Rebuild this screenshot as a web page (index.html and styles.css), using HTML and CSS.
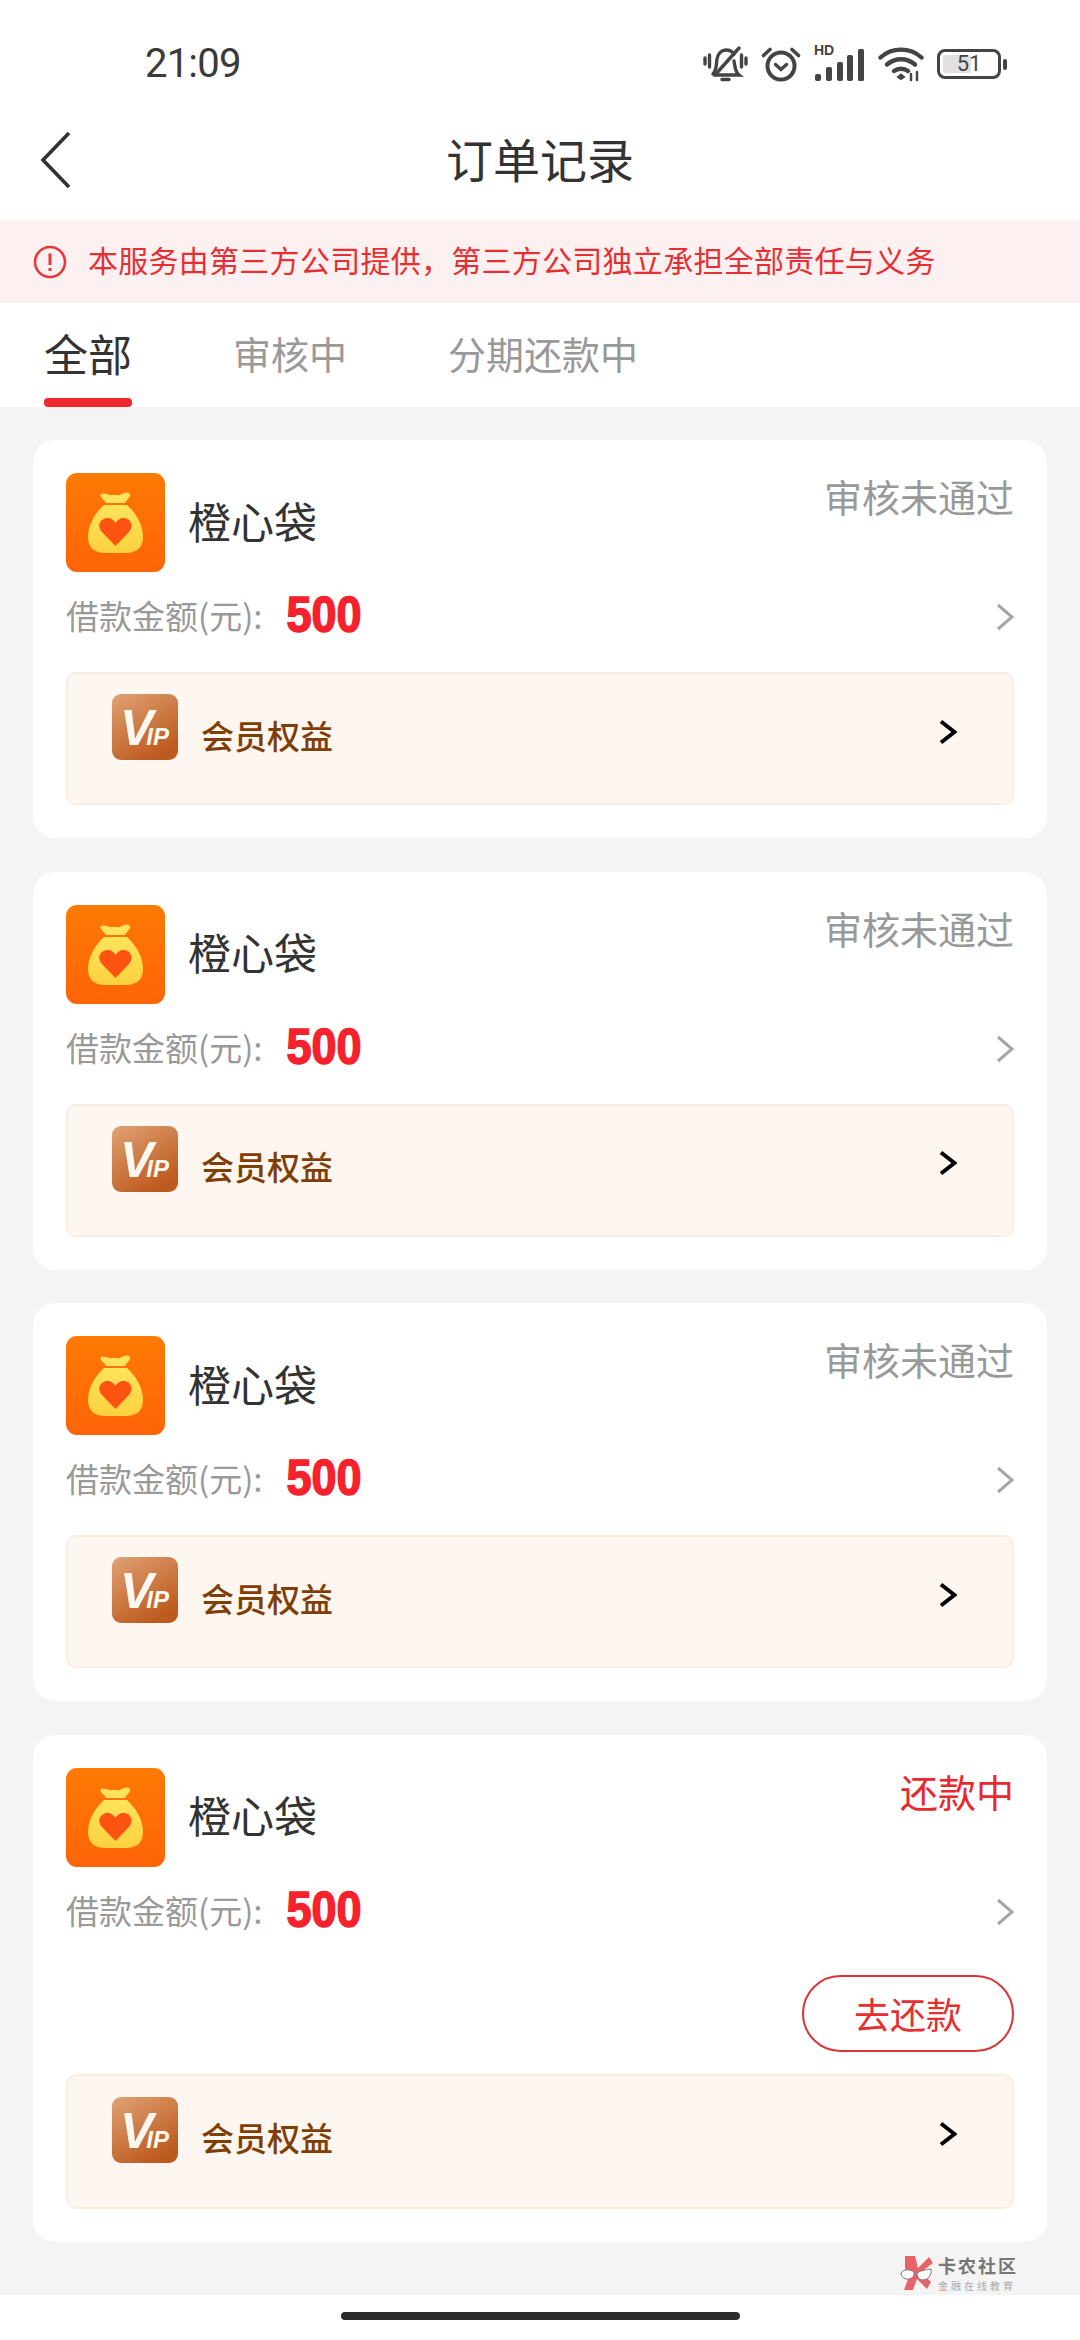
FILE: index.html
```html
<!DOCTYPE html>
<html lang="zh-CN">
<head>
    <meta charset="UTF-8">
    <meta name="viewport" content="width=device-width, initial-scale=1.0">
    <title>订单记录</title>
    <link rel="stylesheet" href="styles.css">
</head>
<body>
    <svg class="defs" width="0" height="0" aria-hidden="true">
        <defs>
            <linearGradient id="bagBg" x1="0" y1="0" x2="0" y2="1">
                <stop offset="0" stop-color="#ff7a05"/>
                <stop offset="1" stop-color="#ff6408"/>
            </linearGradient>
            <linearGradient id="bagBody" x1="0" y1="0" x2="0" y2="1">
                <stop offset="0" stop-color="#ffe35c"/>
                <stop offset="1" stop-color="#fcd13e"/>
            </linearGradient>
            <linearGradient id="vipBg" x1="0" y1="0" x2="0.6" y2="1">
                <stop offset="0" stop-color="#e0a274"/>
                <stop offset="1" stop-color="#bd5a1e"/>
            </linearGradient>
            <symbol id="bag" viewBox="0 0 99 99">
                <rect width="99" height="99" rx="11" fill="url(#bagBg)"/>
                <path fill="url(#bagBody)" d="M38 32H61C70 40 77 52 77 64C77 75 70 80 60 80H39C29 80 22 75 22 64C22 52 29 40 38 32Z"/>
                <path fill="#ffe35c" d="M35 21C39 19 43 23 46 22C49 21 51 23 54 22C57 20 62 18 64 21C65 24 61 26 59 30H40C38 26 33 24 35 21Z"/>
                <path fill="#ff5312" d="M49.5 73L36 59C30 52 35 45 42 45C45 45 48 47 49.5 50C51 47 54 45 57 45C64 45 69 52 63 59Z"/>
            </symbol>
            <symbol id="vip" viewBox="0 0 66 66">
                <rect width="66" height="66" rx="9" fill="url(#vipBg)"/>
                <text class="vip-text" x="8" y="51"><tspan class="vip-v">V</tspan><tspan class="vip-ip" dx="-7">IP</tspan></text>
            </symbol>
            <symbol id="arrow-gray" viewBox="0 0 18 28">
                <path d="M2 2L16 14L2 26" fill="none" stroke="#a6a6a6" stroke-width="3"/>
            </symbol>
            <symbol id="arrow-black" viewBox="0 0 18 26">
                <path d="M2 2.500L15.500 13L2 23.500" fill="none" stroke="#000" stroke-width="4"/>
            </symbol>
        </defs>
    </svg>

    <div class="page">
        <div class="statusbar">
            <span class="time">21:09</span>
            <div class="status-icons">
                <svg class="icon-bell" width="45" height="36" viewBox="0 0 45 36" fill="none" stroke="#444" stroke-width="3.400" stroke-linecap="round">
                    <path d="M2 12V18M6.500 9V21M43 12V18M38.500 9V21"/>
                    <path d="M10 28C14 24 13 19 14 13C15 7 19 4 23 4C26 4 29 5 31 8"/>
                    <path d="M12 29H36C32 26 32 20 31 15"/>
                    <path d="M12 29L36 2"/>
                    <path d="M19 33.500H26" stroke-width="3.500"/>
                </svg>
                <svg class="icon-alarm" width="40" height="36" viewBox="0 0 40 36" fill="none" stroke="#444" stroke-linecap="round">
                    <circle cx="20" cy="20" r="13.500" stroke-width="4"/>
                    <path d="M14.500 18.500L20 23.500L25.500 18.500" stroke-width="3.400"/>
                    <path d="M2.500 9.500L9 3.500M37.500 9.500L31 3.500" stroke-width="3.600"/>
                </svg>
                <div class="signal">
                    <span class="hd">HD</span>
                    <svg width="51" height="34" viewBox="0 0 51 34" fill="#444">
                        <rect x="1" y="26" width="6" height="7" rx="2"/>
                        <rect x="12" y="19" width="6" height="14" rx="2"/>
                        <rect x="23" y="14" width="6" height="19" rx="2"/>
                        <rect x="33" y="7" width="6" height="26" rx="2"/>
                        <rect x="44" y="1" width="6" height="32" rx="1.500"/>
                    </svg>
                </div>
                <svg class="icon-wifi" width="46" height="36" viewBox="0 0 46 36" fill="none" stroke="#444" stroke-width="4.400" stroke-linecap="round">
                    <path d="M2.500 11.500C14 1 32 1 43.500 11.500"/>
                    <path d="M9 18.500C17 11.500 29 11.500 37 18.500"/>
                    <path d="M16 25C20 22 26 22 30 25"/>
                    <path d="M20 31L23 28.500L26 31L23 33Z" fill="#444" stroke-width="2"/>
                    <path d="M33 28V34M39 26V34" stroke-width="2.500"/>
                </svg>
                <div class="battery">
                    <div class="battery-body">
                        <span class="battery-fill"></span>
                        <span class="battery-num">51</span>
                    </div>
                    <span class="battery-nub"></span>
                </div>
            </div>
        </div>

        <div class="navbar">
            <svg class="back" width="32" height="58" viewBox="0 0 32 58">
                <path d="M29 2L3 29L29 56" fill="none" stroke="#333" stroke-width="3.600"/>
            </svg>
            <h1>订单记录</h1>
        </div>

        <div class="notice">
            <svg width="34" height="34" viewBox="0 0 34 34" fill="none" stroke="#e8373a">
                <circle cx="17" cy="17" r="15" stroke-width="2.600"/>
                <path d="M17 8.500V20" stroke-width="3"/>
                <path d="M17 23V26" stroke-width="3"/>
            </svg>
            <span class="notice-text">本服务由第三方公司提供，第三方公司独立承担全部责任与义务</span>
        </div>

        <div class="tabs">
            <div class="tab active">全部</div>
            <div class="tab">审核中</div>
            <div class="tab">分期还款中</div>
        </div>

        <div class="list">
            <div class="card">
                <div class="card-head">
                    <svg class="app-icon"><use href="#bag"/></svg>
                    <span class="app-name">橙心袋</span>
                    <span class="status">审核未通过</span>
                </div>
                <div class="amount-row">
                    <span class="amount-label">借款金额(元):</span>
                    <span class="amount">500</span>
                    <svg class="arrow"><use href="#arrow-gray"/></svg>
                </div>
                <div class="member">
                    <svg class="vip-icon"><use href="#vip"/></svg>
                    <span class="member-text">会员权益</span>
                    <svg class="member-arrow"><use href="#arrow-black"/></svg>
                </div>
            </div>

            <div class="card">
                <div class="card-head">
                    <svg class="app-icon"><use href="#bag"/></svg>
                    <span class="app-name">橙心袋</span>
                    <span class="status">审核未通过</span>
                </div>
                <div class="amount-row">
                    <span class="amount-label">借款金额(元):</span>
                    <span class="amount">500</span>
                    <svg class="arrow"><use href="#arrow-gray"/></svg>
                </div>
                <div class="member">
                    <svg class="vip-icon"><use href="#vip"/></svg>
                    <span class="member-text">会员权益</span>
                    <svg class="member-arrow"><use href="#arrow-black"/></svg>
                </div>
            </div>

            <div class="card">
                <div class="card-head">
                    <svg class="app-icon"><use href="#bag"/></svg>
                    <span class="app-name">橙心袋</span>
                    <span class="status">审核未通过</span>
                </div>
                <div class="amount-row">
                    <span class="amount-label">借款金额(元):</span>
                    <span class="amount">500</span>
                    <svg class="arrow"><use href="#arrow-gray"/></svg>
                </div>
                <div class="member">
                    <svg class="vip-icon"><use href="#vip"/></svg>
                    <span class="member-text">会员权益</span>
                    <svg class="member-arrow"><use href="#arrow-black"/></svg>
                </div>
            </div>

            <div class="card">
                <div class="card-head">
                    <svg class="app-icon"><use href="#bag"/></svg>
                    <span class="app-name">橙心袋</span>
                    <span class="status status-red">还款中</span>
                </div>
                <div class="amount-row">
                    <span class="amount-label">借款金额(元):</span>
                    <span class="amount">500</span>
                    <svg class="arrow"><use href="#arrow-gray"/></svg>
                </div>
                <div class="actions">
                    <span class="repay-btn">去还款</span>
                </div>
                <div class="member member-tight">
                    <svg class="vip-icon"><use href="#vip"/></svg>
                    <span class="member-text">会员权益</span>
                    <svg class="member-arrow"><use href="#arrow-black"/></svg>
                </div>
            </div>
        </div>

        <div class="homebar">
            <span class="home-pill"></span>
        </div>

        <!-- watermark sits over the grey area -->
        <div class="watermark">
            <svg width="34" height="36" viewBox="0 0 34 36">
                <path fill="#e8626a" d="M5 1H15L18 13L29 2L33 8L21 17L31 27L27 34L17 24L13 35H4L8 24L5 13Z"/>
                <path fill="#fff" stroke="#777" stroke-width="1" d="M1 18C4 14 10 14 14 17C15 22 10 25 6 24C3 23 1 21 1 18Z"/>
                <path fill="#fff" stroke="#777" stroke-width="1" d="M17 18C21 15 27 15 31 14C32 20 28 25 23 25C19 25 17 22 17 18Z"/>
            </svg>
            <div class="watermark-text">
                <span class="wm-title">卡农社区</span>
                <span class="wm-sub">金融在线教育</span>
            </div>
        </div>
    </div>
</body>
</html>
```

FILE: styles.css
```css
* {
    box-sizing: border-box;
}
body {
    margin: 0;
    padding: 0;
    background-color: #fff;
    font-family: "Noto Sans CJK SC", "Liberation Sans", sans-serif;
}
.defs {
    position: absolute;
}
.page {
    position: relative;
    width: 1080px;
    height: 2340px;
    display: flex;
    flex-direction: column;
    overflow: hidden;
}

/* status bar */
.statusbar {
    height: 126px;
    flex: none;
    display: flex;
    justify-content: space-between;
    padding: 45px 73px 0 145px;
}
.time {
    font-family: Roboto, "Liberation Sans", sans-serif;
    font-size: 40px;
    line-height: 38px;
    letter-spacing: -0.8px;
    color: #3a3a3a;
}
.status-icons {
    display: flex;
    align-items: center;
    height: 38px;
    gap: 13px;
}
.signal {
    position: relative;
    width: 51px;
    height: 36px;
}
.signal svg {
    display: block;
    margin-top: 2px;
}
.hd {
    position: absolute;
    left: 0;
    top: -3px;
    font-family: "Liberation Sans", sans-serif;
    font-weight: 700;
    font-size: 14px;
    line-height: 14px;
    color: #444;
}
.battery {
    display: flex;
    align-items: center;
    gap: 2px;
}
.battery-body {
    position: relative;
    width: 64px;
    height: 30px;
    border: 3px solid #444;
    border-radius: 8px;
    display: flex;
    align-items: center;
    justify-content: center;
}
.battery-fill {
    position: absolute;
    left: 3px;
    top: 3px;
    bottom: 3px;
    width: 28px;
    background-color: #e0e0e0;
    border-radius: 2px;
}
.battery-num {
    position: relative;
    font-family: Roboto, "Liberation Sans", sans-serif;
    font-size: 22px;
    line-height: 24px;
    color: #444;
}
.battery-nub {
    width: 4px;
    height: 11px;
    background-color: #444;
    border-radius: 2px;
}

/* title */
.navbar {
    position: relative;
    height: 94px;
    flex: none;
    display: flex;
    align-items: center;
    justify-content: center;
    padding-bottom: 30px;
}
.back {
    position: absolute;
    left: 40px;
    top: 5px;
}
h1 {
    margin: 0;
    font-size: 47px;
    font-weight: 400;
    line-height: 66px;
    color: #333;
}

.notice {
    height: 83px;
    flex: none;
    display: flex;
    align-items: center;
    gap: 21px;
    padding-left: 33px;
    background-color: #fdf0f0;
    font-size: 30px;
    color: #e62f33;
}
.notice-text {
    letter-spacing: 0.27px;
    margin-bottom: 5px;
}

.tabs {
    height: 104px;
    flex: none;
    display: flex;
    padding-left: 44px;
    gap: 101px;
}
.tab {
    height: 104px;
    padding-top: 20px;
    font-size: 38px;
    line-height: 60px;
    color: #999;
}
.tab.active {
    position: relative;
    font-size: 44px;
    color: #333;
}
.tab.active::after {
    content: "";
    position: absolute;
    left: 0;
    right: 0;
    bottom: 0;
    height: 9px;
    border-radius: 4px;
    background-color: #f0282d;
}

.list {
    flex: 1;
    display: flex;
    flex-direction: column;
    gap: 33.500px;
    padding: 33px 33px 0;
    background-color: #f4f4f4;
}
.card {
    padding: 33px;
    background-color: #fff;
    border-radius: 22px;
}
.card-head {
    display: flex;
    align-items: center;
    height: 99px;
}
.app-icon {
    width: 99px;
    height: 99px;
    flex: none;
}
.app-name {
    margin-left: 23px;
    margin-bottom: 6px;
    font-size: 43px;
    line-height: 60px;
    color: #333;
}
.status {
    align-self: flex-start;
    margin-left: auto;
    margin-top: -3px;
    font-size: 38px;
    line-height: 52px;
    color: #999;
}
.status-red {
    color: #e8282c;
}
.amount-row {
    display: flex;
    align-items: center;
    height: 44px;
    margin-top: 21px;
}
.amount-label {
    font-size: 33px;
    line-height: 44px;
    color: #999;
}
/* digits in the app are condensed and very heavy */
.amount {
    display: inline-block;
    margin-left: 24px;
    font-family: "Liberation Sans", sans-serif;
    font-weight: 700;
    font-size: 45px;
    line-height: 44px;
    color: #f5222d;
    -webkit-text-stroke: 1.4px #f5222d;
    transform: scaleY(1.12);
}
.arrow {
    width: 18px;
    height: 28px;
    margin-left: auto;
    margin-top: 4px;
}
.member {
    display: flex;
    align-items: center;
    height: 133px;
    margin-top: 35px;
    padding: 0 55px 0 44px;
    background-color: #fdf6f1;
    border: 2px solid #f9ede2;
    border-radius: 10px;
}
.member-tight {
    height: 135px;
    margin-top: 22px;
}
.vip-icon {
    width: 66px;
    height: 66px;
    flex: none;
    margin-bottom: 23px;
}
.member-text {
    margin-left: 23px;
    margin-bottom: 8px;
    font-size: 33px;
    font-weight: 500;
    line-height: 44px;
    color: #7f3f04;
}
.member-arrow {
    width: 18px;
    height: 26px;
    margin-left: auto;
    margin-bottom: 14px;
}
.vip-text {
    font-family: "Liberation Sans", sans-serif;
    font-style: italic;
    font-weight: 700;
    fill: #fff8f0;
}
.vip-v {
    font-size: 50px;
}
.vip-ip {
    font-size: 24px;
}
.actions {
    display: flex;
    justify-content: flex-end;
    margin-top: 43px;
}
.repay-btn {
    width: 212px;
    height: 77px;
    display: flex;
    align-items: center;
    justify-content: center;
    border: 2px solid #d9343a;
    border-radius: 39px;
    font-size: 36px;
    color: #e62f33;
}

.homebar {
    height: 45px;
    flex: none;
    display: flex;
    justify-content: center;
    padding-top: 17px;
    background-color: #fff;
}
.home-pill {
    width: 399px;
    height: 8px;
    border-radius: 4px;
    background-color: #2b2b2b;
}

.watermark {
    position: absolute;
    left: 900px;
    top: 2252px;
    display: flex;
    align-items: center;
    gap: 4px;
}
.watermark-text {
    display: flex;
    flex-direction: column;
}
.wm-title {
    font-size: 18px;
    font-weight: 700;
    line-height: 26px;
    letter-spacing: 2px;
    color: #777;
}
.wm-sub {
    font-size: 10px;
    line-height: 15px;
    letter-spacing: 3px;
    color: #aaa;
}
```
